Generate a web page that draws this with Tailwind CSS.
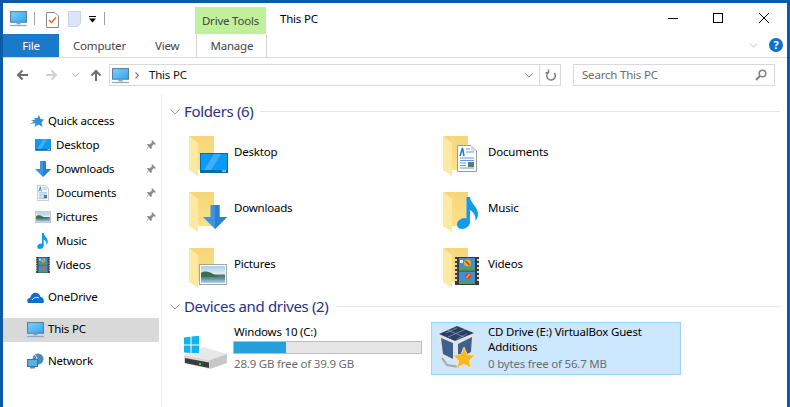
<!DOCTYPE html>
<html lang="en">
<head>
  <meta charset="UTF-8" />
  <title>This PC</title>
  <script src="https://cdn.jsdelivr.net/npm/@tailwindcss/browser@4"></script>
</head>
<body class="w-[790px] h-[407px] overflow-hidden bg-[#0a5aa6] pt-[3px] pl-[3px] pr-[3px] font-['Noto_Sans',sans-serif] text-[11.5px] tracking-[-0.2px] text-[#000]">
  <svg class="absolute w-0 h-0">
    <defs>
      <linearGradient id="screen" x1="0" y1="0" x2="1" y2="1"><stop offset="0" stop-color="#7fd2fb"/><stop offset="1" stop-color="#2ea4ee"/></linearGradient>
      <linearGradient id="back" x1="0" y1="0" x2="0" y2="1"><stop offset="0" stop-color="#f6d679"/><stop offset="1" stop-color="#fbe08a"/></linearGradient>
      <linearGradient id="sky" x1="0" y1="0" x2="0" y2="1"><stop offset="0" stop-color="#a9cfe8"/><stop offset="0.45" stop-color="#dcecf4"/><stop offset="0.55" stop-color="#4e7d4e"/><stop offset="0.75" stop-color="#5f93b3"/><stop offset="1" stop-color="#b4d4e6"/></linearGradient>
      <symbol id="pc" viewBox="0 0 16 16">
        <rect x="0.5" y="1.5" width="15" height="10" fill="url(#screen)" stroke="#5b7f9a"/>
        <rect x="6" y="12" width="4" height="1.5" fill="#8ba3b8"/>
        <rect x="0" y="14" width="16" height="1.2" fill="#90a8c0"/>
      </symbol>
      <symbol id="folder" viewBox="0 0 48 48">
        <rect x="3" y="6" width="25" height="34" fill="url(#back)"/>
        <path d="M3 6 L12 13 V46 L3 40 Z" fill="#fde8a4"/>
      </symbol>
      <symbol id="desktop" viewBox="0 0 28 20">
        <rect x="0.5" y="0.5" width="27" height="19" fill="#0a9bf8" stroke="#0a6aa8"/>
        <path d="M14 1 H21 L11 17 H4 Z" fill="#3db0fb"/>
        <rect x="1" y="17" width="26" height="2" fill="#0a6aa8"/>
        <rect x="22" y="17.5" width="4" height="1" fill="#fff"/>
      </symbol>
      <symbol id="down" viewBox="0 0 24 24">
        <path d="M7.500 0 H16.500 V12 H24 L12 24 L0 12 H7.500 Z" fill="#3d94e0"/>
        <path d="M12 0 H16.500 V12 H24 L12 24 Z" fill="#2b7fd0"/>
      </symbol>
      <symbol id="doc" viewBox="0 0 20 27">
        <path d="M0.500 0.500 H14 L19.500 6 V26.500 H0.500 Z" fill="#fff" stroke="#9a9a9a"/>
        <path d="M14 0.500 V6 H19.500 Z" fill="#dcdcdc"/>
        <path d="M3 11 L5.500 3 L7 11" fill="none" stroke="#1b78d4" stroke-width="1.500"/>
        <path d="M9 4 H13 M9 7 H17 M3 13 H17 M3 15.500 H17 M3 18 H9 M3 20.500 H9 M3 23 H17" stroke="#5a9bd8"/>
        <rect x="11" y="17" width="6" height="5" fill="#4e7d88"/>
      </symbol>
      <symbol id="note" viewBox="0 0 21 32">
        <path d="M9.500 0 H13 C13.500 6 21 10 21 17 C21 20 20 22 18.500 24 C19 20 17 15 13 13 V25 C13 29 9 32 5 32 C2 32 0 30 0 27.500 C0 24 4 21 7.500 21 C8.300 21 9 21.200 9.500 21.500 Z" fill="#0f9bf0"/>
      </symbol>
      <symbol id="picture" viewBox="0 0 28 21">
        <rect x="0.500" y="0.500" width="27" height="20" fill="#fff" stroke="#a4a4a4"/>
        <rect x="2" y="2" width="24" height="17" fill="url(#sky)"/>
        <path d="M2 9 C6 6 11 8 14 10 L20 13 H2 Z" fill="#3f6f4a"/>
      </symbol>
      <symbol id="film" viewBox="0 0 24 28">
        <rect width="24" height="28" fill="#3a3a3a"/>
        <path d="M1 2 V26 M23 2 V26" stroke="#d8d8d8" stroke-width="2" stroke-dasharray="2 2"/>
        <rect x="4" y="1" width="16" height="12.500" fill="#3d8fd8"/>
        <rect x="4" y="14.500" width="16" height="12.500" fill="#3d8fd8"/>
        <rect x="4" y="10" width="16" height="3.500" fill="#4fa04f"/>
        <rect x="4" y="24" width="16" height="3" fill="#4fa04f"/>
        <circle cx="12.500" cy="6" r="3.500" fill="#e8b020"/><path d="M10.500 4 L14.500 8" stroke="#c83020" stroke-width="1.500"/>
        <circle cx="13" cy="19" r="3" fill="#d84020"/><path d="M11.500 21 L14.500 17" stroke="#e8b020" stroke-width="1.500"/>
        <rect x="5" y="3" width="3" height="3" fill="#e8e8e8"/>
      </symbol>
      <symbol id="pin" viewBox="0 0 10 11">
        <path d="M6 0 L10 4 L8.800 4.800 L7.500 4.200 L5.700 6.500 L5.800 8.500 L4.800 9 L2.800 7 L0 10.500 L0 10 L2.500 6.500 L1 4.700 L1.800 4 L3.800 4.200 L6 2.300 L5.500 1 Z" fill="#8c8c8c"/>
      </symbol>
      <symbol id="arrowLeft" viewBox="0 0 12 12">
        <path d="M12 6 H2 M6.500 1.500 L2 6 L6.500 10.500" fill="none" stroke="currentColor" stroke-width="2"/>
      </symbol>
      <symbol id="chev" viewBox="0 0 10 6">
        <path d="M0.500 0.500 L5 5 L9.500 0.500" fill="none" stroke="currentColor"/>
      </symbol>
    </defs>
  </svg>

  <div class="w-[784px] h-[404px] bg-white flex flex-col">
    <!-- title row -->
    <div class="h-[31px] flex relative">
      <div class="flex items-center pl-[7px] w-[192px] h-[31px]">
        <svg class="w-[17px] h-[17px] mb-[1px]"><use href="#pc"/></svg>
        <div class="w-px h-[13px] bg-[#a0a0a0] ml-[7px]"></div>
        <svg class="w-[13px] h-[16px] ml-[11px] mt-[2px]" viewBox="0 0 13 16">
          <path d="M0.500 0.500 H9 L12.500 4 V15.500 H0.500 Z" fill="#fff" stroke="#8a8a8a"/>
          <path d="M3 8 L5.500 10.500 L10 5.500" fill="none" stroke="#e8622a" stroke-width="1.500"/>
        </svg>
        <svg class="w-[13px] h-[16px] ml-[9px]" viewBox="0 0 13 16">
          <path d="M0.500 0.500 H12.500 V12 L9.500 15.500 H0.500 Z" fill="#dce6f4" stroke="#c4d2e6"/>
        </svg>
        <svg class="w-[7px] h-[7px] ml-[8px] mt-[2px]" viewBox="0 0 7 7">
          <rect y="0" width="7" height="1" fill="#000"/><path d="M0 2.500 H7 L3.500 6.500 Z" fill="#000"/>
        </svg>
        <div class="w-px h-[13px] bg-[#a0a0a0] ml-[8px]"></div>
      </div>
      <div class="w-[71px] h-[27px] mt-[4px] bg-[#c1f09a] flex items-center justify-center text-[#444]">Drive Tools</div>
      <div class="ml-[14px] h-[31px] flex items-center">This PC</div>
      <div class="ml-auto flex items-start pr-[18px] pt-[11px]">
        <div class="w-[10px] h-px bg-black mt-[4px]"></div>
        <div class="w-[10px] h-[10px] border border-black ml-[35px] mt-[-1px]"></div>
        <svg class="w-[10px] h-[10px] ml-[36px] mt-[-1px]" viewBox="0 0 10 10"><path d="M0 0 L10 10 M10 0 L0 10" stroke="#000"/></svg>
      </div>
    </div>

    <!-- ribbon tabs -->
    <div class="h-[24px] flex border-b border-[#dadbdc] relative">
      <div class="w-[56px] h-[23px] bg-[#1979ca] text-white flex items-center justify-center pt-[1px]">File</div>
      <div class="ml-[14px] h-[23px] flex items-center text-[#444] pt-[1px]">Computer</div>
      <div class="ml-[29px] h-[23px] flex items-center text-[#444] pt-[1px]">View</div>
      <div class="ml-[17px] w-[71px] h-[23px] border-x border-[#d5d5d5] flex items-center justify-center text-[#444] pt-[1px]">Manage</div>
      <svg class="w-[9px] h-[5px] ml-auto mt-[9px] text-[#b5b5b5]"><use href="#chev"/></svg>
      <div class="w-[14px] h-[14px] rounded-full bg-[#0f6fd0] text-white text-[11px] font-bold flex items-center justify-center ml-[11px] mr-[4px] mt-[4px]">?</div>
    </div>

    <!-- address row -->
    <div class="h-[36px] flex items-start pt-[6px]">
      <svg class="w-[12px] h-[12px] ml-[13px] mt-[5px] text-[#6e6e6e]"><use href="#arrowLeft"/></svg>
      <svg class="w-[12px] h-[12px] ml-[18px] mt-[5px] text-[#d0d0d0] rotate-180"><use href="#arrowLeft"/></svg>
      <svg class="w-[7px] h-[4px] ml-[14px] mt-[9px] text-[#8a8a8a]"><use href="#chev"/></svg>
      <svg class="w-[12px] h-[12px] ml-[11px] mt-[5px] text-[#6e6e6e] rotate-90"><use href="#arrowLeft"/></svg>
      <div class="ml-[7px] w-[452px] h-[22px] border border-[#d9d9d9] flex items-center">
        <svg class="w-[17px] h-[17px] ml-[2px]"><use href="#pc"/></svg>
        <svg class="w-[4px] h-[7px] ml-[6px] text-[#777]" viewBox="0 0 4 7"><path d="M0.500 0.500 L3.500 3.500 L0.500 6.500" fill="none" stroke="currentColor" stroke-width="1.200"/></svg>
        <span class="ml-[10px] text-[#111]">This PC</span>
        <svg class="w-[8px] h-[5px] ml-auto mr-[6px] text-[#666]"><use href="#chev"/></svg>
        <div class="w-[21px] h-[20px] border-l border-[#d9d9d9] flex items-center justify-center">
          <svg class="w-[11px] h-[12px]" viewBox="0 0 11 12"><path d="M8.800 3.500 A4.300 4.300 0 1 1 3 2.800 M3 0 V3.300 H0" transform="translate(0.500 0.500)" fill="none" stroke="#808080" stroke-width="1.500"/></svg>
        </div>
      </div>
      <div class="ml-[12px] w-[202px] h-[22px] border border-[#d9d9d9] flex items-center pl-[8px] text-[#6d6d6d]">
        Search This PC
        <svg class="w-[12px] h-[12px] ml-auto mr-[7px]" viewBox="0 0 12 12"><circle cx="7.500" cy="4.500" r="3.300" fill="none" stroke="#808080" stroke-width="1.500"/><path d="M5 7 L1 11" stroke="#808080" stroke-width="2"/></svg>
      </div>
    </div>

    <!-- body -->
    <div class="flex flex-1 min-h-0">
      <nav class="w-[156px] shrink-0 pt-[16px] mr-[2px]">
        <div class="h-[24px] pb-[2px] flex items-center pl-[27px]">
          <svg class="w-[14px] h-[13px]" viewBox="0 0 14 13"><path d="M9 0 L10.500 4 L14 4.500 L11.500 7.500 L12.500 12 L8.500 9.500 L4.500 12 L5.500 8 L0 9 L4 6.500 L1 5.500 L5.500 4.500 L3.500 3 L7.500 3 Z" fill="#2f8fdc"/></svg>
          <span class="ml-[4px]">Quick access</span>
        </div>
        <div class="h-[24px] pb-[2px] flex items-center pl-[32px]">
          <svg class="w-[16px] h-[12px]"><use href="#desktop"/></svg>
          <span class="ml-[5px]">Desktop</span>
          <svg class="w-[10px] h-[11px] ml-auto mr-[3px]"><use href="#pin"/></svg>
        </div>
        <div class="h-[24px] pb-[2px] flex items-center pl-[32px]">
          <svg class="w-[16px] h-[16px]"><use href="#down"/></svg>
          <span class="ml-[5px]">Downloads</span>
          <svg class="w-[10px] h-[11px] ml-auto mr-[3px]"><use href="#pin"/></svg>
        </div>
        <div class="h-[24px] pb-[2px] flex items-center pl-[34px]">
          <svg class="w-[12px] h-[16px]"><use href="#doc"/></svg>
          <span class="ml-[7px]">Documents</span>
          <svg class="w-[10px] h-[11px] ml-auto mr-[3px]"><use href="#pin"/></svg>
        </div>
        <div class="h-[24px] pb-[2px] flex items-center pl-[32px]">
          <svg class="w-[16px] h-[12px]"><use href="#picture"/></svg>
          <span class="ml-[5px]">Pictures</span>
          <svg class="w-[10px] h-[11px] ml-auto mr-[3px]"><use href="#pin"/></svg>
        </div>
        <div class="h-[24px] pb-[2px] flex items-center pl-[34px]">
          <svg class="w-[11px] h-[16px]"><use href="#note"/></svg>
          <span class="ml-[8px]">Music</span>
        </div>
        <div class="h-[24px] pb-[2px] flex items-center pl-[33px]">
          <svg class="w-[14px] h-[16px]"><use href="#film"/></svg>
          <span class="ml-[6px]">Videos</span>
        </div>

        <div class="h-[24px] pb-[2px] mt-[8px] flex items-center pl-[24px]">
          <svg class="w-[17px] h-[11px]" viewBox="0 0 17 11"><path d="M1 11 C-1 8 1 6 3 6 C4 2 7 0 10 1 C12 1.500 13 3 13.500 5 C16 5 17.500 8 16.500 11 Z" fill="#0f6fc8"/><path d="M5 8 C7 5 10 5 12 6" fill="none" stroke="#fff"/></svg>
          <span class="ml-[4px]">OneDrive</span>
        </div>
        <div class="h-[24px] pb-[2px] mt-[8px] flex items-center pl-[24px] bg-[#d9d9d9]">
          <svg class="w-[17px] h-[17px]"><use href="#pc"/></svg>
          <span class="ml-[4px]">This PC</span>
        </div>
        <div class="h-[24px] pb-[2px] mt-[8px] flex items-center pl-[24px]">
          <svg class="w-[17px] h-[16px]" viewBox="0 0 17 16"><circle cx="11" cy="6" r="5.500" fill="#4a8cc0"/><path d="M8 2 C10 4 11 8 10 11" stroke="#cfe4f4" fill="none"/><rect x="0.500" y="6.500" width="10" height="7" fill="#58b0e8" stroke="#44709a"/><rect x="3" y="14" width="5" height="1.500" fill="#6d8da8"/></svg>
          <span class="ml-[4px]">Network</span>
        </div>
      </nav>
      <div class="w-px bg-[#efefef] shrink-0"></div>

      <main class="flex-1 pl-[8px] pr-[7px] min-w-0">
        <div class="h-[22px] mt-[6px] flex items-center">
          <svg class="w-[10px] h-[6px] text-[#a0a0a0] mt-[1px]"><use href="#chev"/></svg>
          <span class="ml-[4px] text-[15px] tracking-[-0.35px] text-[#1e3287]">Folders (6)</span>
          <div class="flex-1 h-px bg-[#e5e5e5] ml-[7px] mt-[1px]"></div>
        </div>
        <div class="grid grid-cols-[254px_254px] mt-[4px]">
          <div class="h-[56px] flex items-center pl-[16px]">
            <svg class="w-[48px] h-[48px]" viewBox="0 0 48 48"><use href="#folder" width="48" height="48"/><use href="#desktop" x="14" y="23" width="28" height="20"/></svg>
            <span class="mb-[5px]">Desktop</span>
          </div>
          <div class="h-[56px] flex items-center pl-[16px]">
            <svg class="w-[48px] h-[48px]" viewBox="0 0 48 48"><use href="#folder" width="48" height="48"/><use href="#doc" x="17" y="15" width="20" height="27"/></svg>
            <span class="mb-[5px]">Documents</span>
          </div>
          <div class="h-[56px] flex items-center pl-[16px]">
            <svg class="w-[48px] h-[48px]" viewBox="0 0 48 48"><use href="#folder" width="48" height="48"/><use href="#down" x="17" y="19" width="24" height="24"/></svg>
            <span class="mb-[5px]">Downloads</span>
          </div>
          <div class="h-[56px] flex items-center pl-[16px]">
            <svg class="w-[48px] h-[48px]" viewBox="0 0 48 48"><use href="#folder" width="48" height="48"/><use href="#note" x="17" y="11" width="21" height="32"/></svg>
            <span class="mb-[5px]">Music</span>
          </div>
          <div class="h-[56px] flex items-center pl-[16px]">
            <svg class="w-[48px] h-[48px]" viewBox="0 0 48 48"><use href="#folder" width="48" height="48"/><use href="#picture" x="13" y="22" width="28" height="21"/></svg>
            <span class="mb-[5px]">Pictures</span>
          </div>
          <div class="h-[56px] flex items-center pl-[16px]">
            <svg class="w-[48px] h-[48px]" viewBox="0 0 48 48"><use href="#folder" width="48" height="48"/><use href="#film" x="15" y="15" width="24" height="28"/></svg>
            <span class="mb-[5px]">Videos</span>
          </div>
        </div>

        <div class="h-[22px] mt-[1px] flex items-center">
          <svg class="w-[10px] h-[6px] text-[#a0a0a0] mt-[1px]"><use href="#chev"/></svg>
          <span class="ml-[4px] text-[15px] tracking-[-0.35px] text-[#1e3287]">Devices and drives (2)</span>
          <div class="flex-1 h-px bg-[#e5e5e5] ml-[7px] mt-[1px]"></div>
        </div>
        <div class="flex mt-[5px]">
          <div class="w-[261px] h-[53px] flex pl-[13px]">
            <svg class="w-[44px] h-[36px] mt-[13px] shrink-0" viewBox="0 0 44 36">
              <path d="M1 2.500 L7.500 1.700 V9.500 H1 Z M8.500 1.500 L16 0.700 V9.500 H8.500 Z M1 10.500 H7.500 V18 L1 17.500 Z M8.500 10.500 H16 V18.500 L8.500 18 Z" fill="#10b4ee"/>
              <path d="M1 20 L6 18 H16 V15 L20 12 L44 19 L27 25 Z" fill="#e8e8e8"/>
              <path d="M27 25 L44 19 V28 L27 34 Z" fill="#c8c8c8"/>
              <path d="M1 20 L27 25 V34 L1 28 Z" fill="#d8d8d8"/>
              <path d="M2 23 L26 27.500 V33 L2 28 Z" fill="#3c3c3c"/>
              <rect x="16" y="28" width="2" height="2" fill="#3bd16f"/>
            </svg>
            <div class="ml-[6px] w-[189px] shrink-0">
              <div class="h-[18px] flex items-center pl-[1px] pt-[1px]">Windows 10 (C:)</div>
              <div class="h-[13px] border border-[#bcbcbc] bg-[#e6e6e6] mt-[1px]">
                <div class="h-full bg-[#26a0da]" style="width: 28%"></div>
              </div>
              <div class="h-[18px] flex items-center pl-[1px] pt-[1px] text-[#6d6d6d]">28.9 GB free of 39.9 GB</div>
            </div>
          </div>
          <div class="w-[250px] h-[53px] bg-[#cce8ff] border border-[#99d1ff] flex">
            <svg class="w-[40px] h-[44px] ml-[5px] mt-[2px] shrink-0" viewBox="0 0 40 44">
              <path d="M20 1 L38 8 L37 30 L19 39 L4 31 L0 9 Z" fill="#dfe4ea"/>
              <path d="M20 1 L37 8 L18 16 L2 9 Z" fill="#2b4163"/>
              <path d="M10 5 L27 12 M28 4.500 L11 12 M20 3 L9 8 M20 14 L30 9" stroke="#8ea4c4" stroke-width="0.700" fill="none"/>
              <path d="M4 13 L16 18 L16 34 L6 29 Z" fill="#3f5f8c"/>
              <path d="M21 19 L35 12 L34 27 L21 34 Z" fill="#3f5f8c"/>
              <path d="M5 33 L10 40 L22 42" fill="none" stroke="#a8a8a8" stroke-width="2"/>
              <path d="M27 22 L30.200 29.500 L38 30.300 L32.200 35.500 L34 43 L27 39 L20 43 L21.800 35.500 L16 30.300 L23.800 29.500 Z" fill="#f8b824" stroke="#fbe6a8" stroke-width="0.800"/>
            </svg>
            <div class="ml-[11px] w-[180px] pt-[1px]">
              <div class="leading-[15px]">CD Drive (E:) VirtualBox Guest Additions</div>
              <div class="h-[18px] flex items-center pt-[1px] text-[#6d6d6d]">0 bytes free of 56.7 MB</div>
            </div>
          </div>
        </div>
      </main>
    </div>
  </div>
</body>
</html>
